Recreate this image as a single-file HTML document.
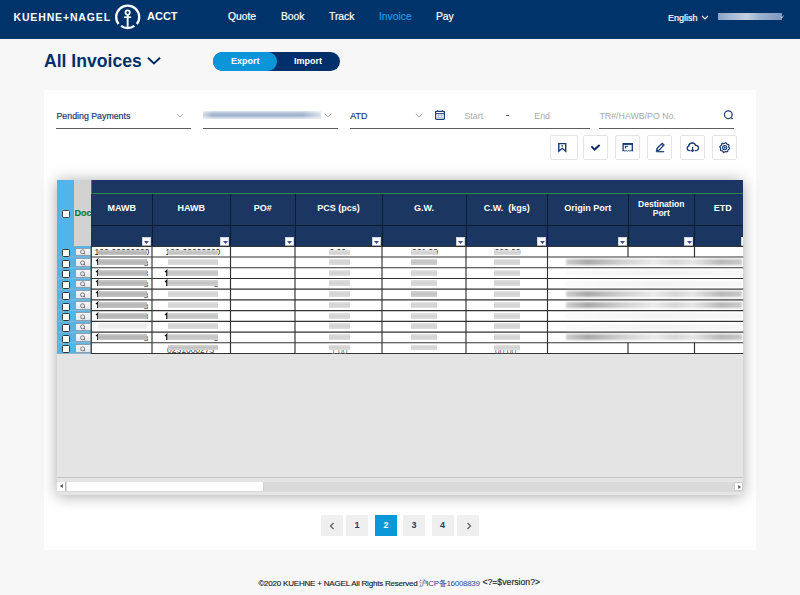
<!DOCTYPE html>
<html><head><meta charset="utf-8">
<style>
*{margin:0;padding:0;box-sizing:border-box}
html,body{width:800px;height:595px;overflow:hidden;background:#f7f7f7;font-family:"Liberation Sans",sans-serif}
.a{position:absolute}
#hdr{left:0;top:0;width:800px;height:39px;background:#003369}
.logo{left:13.5px;top:12px;font-size:10.5px;font-weight:bold;color:#fff;letter-spacing:0.85px;white-space:nowrap;line-height:10px}
.acct{left:147px;top:11px;font-size:11px;font-weight:bold;color:#fff;line-height:11px}
.nav{top:11px;font-size:10.3px;color:#fff;-webkit-text-stroke:0.2px currentColor;line-height:12px;white-space:nowrap}
.title{left:44px;top:50.8px;font-size:17.6px;font-weight:bold;color:#00306b;line-height:20px;white-space:nowrap}
.tog{left:213px;top:52px;width:127px;height:19px;border-radius:10px;background:#00306b}
.exp{left:0;top:0;width:64px;height:19px;border-radius:10px;background:#0b96d9}
.togt{top:4px;font-size:9px;font-weight:bold;color:#fff;line-height:11px}
#panel{left:44px;top:90px;width:712px;height:460px;background:#fff}
.sel{font-size:8.8px;color:#1d3a6c;-webkit-text-stroke:0.2px currentColor;line-height:11px;white-space:nowrap}
.ul{height:1px;background:#5e5e5e}
.ph{font-size:8.8px;color:#a9a9a9;line-height:11px;white-space:nowrap}
.ib{top:135px;width:25px;height:25px;border:1px solid #e6e6e6;border-radius:2px;background:#fff}
.ib svg{position:absolute;left:5px;top:5px}
</style></head><body>
<div id="hdr" class="a">
  <div class="a logo">KUEHNE+NAGEL</div>
  <svg class="a" style="left:110px;top:0px" width="36" height="34" viewBox="110 0 36 34"><g fill="none" stroke="#fff"><path d="M118.52 24.02 A11.5 11.5 0 1 1 136.88 24.02" stroke-width="2.3"/><path d="M134.32 25.88 A11.0 11.0 0 0 1 121.08 25.88" stroke-width="2.3"/><circle cx="127.65" cy="12.6" r="2.2" stroke-width="1.7"/><path d="M124.1 17.2 H131.2" stroke-width="1.6"/><path d="M127.65 14.7 V27.6" stroke-width="1.9"/></g></svg>
  <div class="a acct">ACCT</div>
  <div class="a nav" style="left:228px">Quote</div>
  <div class="a nav" style="left:281px">Book</div>
  <div class="a nav" style="left:329px">Track</div>
  <div class="a nav" style="left:379px;color:#1a9be3">Invoice</div>
  <div class="a nav" style="left:436px">Pay</div>
  <div class="a nav" style="left:668px;top:12px;font-size:9px">English</div>
  <svg class="a" style="left:701px;top:15px" width="8" height="5" viewBox="0 0 8 5"><path d="M1 1 L4 4 L7 1" fill="none" stroke="#fff" stroke-width="1.1"/></svg>
  <div class="a" style="left:718px;top:12.5px;width:64px;height:7.5px;background:linear-gradient(90deg,#8ba3c6,#a6b9d4 20%,#c2cfe0 45%,#9db1cf 65%,#7f98bf 100%);filter:blur(0.7px)"></div>
  <svg class="a" style="left:780px;top:15px" width="4" height="4" viewBox="0 0 4 4"><path d="M0.5 1.5 L2 3 L3.5 0.5" fill="none" stroke="#c8d2e2" stroke-width="0.8"/></svg>
</div>
<div class="a title">All Invoices</div>
<svg class="a" style="left:146px;top:55px" width="16" height="11" viewBox="0 0 16 11"><path d="M1.9 2.7 L7.95 8.4 L14 2.7" fill="none" stroke="#00285f" stroke-width="1.9"/></svg>
<div class="a tog"><div class="a exp"></div>
  <div class="a togt" style="left:18px">Export</div>
  <div class="a togt" style="left:81px">Import</div>
</div>
<div id="panel" class="a"></div>
<!-- filters -->
<div class="a sel" style="left:56.5px;top:111px">Pending Payments</div>
<svg class="a" style="left:176px;top:112.5px" width="8" height="5" viewBox="0 0 8 5"><path d="M0.8 0.8 L4 4 L7.2 0.8" fill="none" stroke="#a0a0a0" stroke-width="0.9"/></svg>
<div class="a ul" style="left:56px;top:128px;width:135px"></div>
<div class="a" style="left:203px;top:111.3px;width:118px;height:8px;background:linear-gradient(90deg,rgba(255,255,255,.5),rgba(255,255,255,0) 8%,rgba(255,255,255,0) 85%,rgba(255,255,255,.6)),linear-gradient(#dfe5ee,#aebdd3 30%,#a0b2cc 55%,#c5d0e0 80%,#e6ebf2);filter:blur(0.5px)"></div>
<svg class="a" style="left:323.5px;top:112.5px" width="8" height="5" viewBox="0 0 8 5"><path d="M0.8 0.8 L4 4 L7.2 0.8" fill="none" stroke="#a0a0a0" stroke-width="0.9"/></svg>
<div class="a ul" style="left:203px;top:128px;width:135px"></div>
<div class="a sel" style="left:350.3px;top:111px">ATD</div>
<svg class="a" style="left:414.5px;top:112.5px" width="8" height="5" viewBox="0 0 8 5"><path d="M0.8 0.8 L4 4 L7.2 0.8" fill="none" stroke="#a0a0a0" stroke-width="0.9"/></svg>
<svg class="a" style="left:430px;top:105px" width="20" height="20" viewBox="430 105 20 20"><g fill="none" stroke="#1d3f78"><rect x="435.6" y="111.4" width="8.8" height="8" rx="0.8" stroke-width="1.2"/><path d="M435.6 113.6 H444.4" stroke-width="1"/><path d="M437.6 110.2 V112 M442.4 110.2 V112" stroke-width="1.2"/><path d="M437 115.4 H443 M437 117.3 H443" stroke-width="0.6" stroke="#7d93b8"/><path d="M438.6 114.2 V118.8 M441.4 114.2 V118.8" stroke-width="0.5" stroke="#9fb0cc"/></g></svg>
<div class="a ph" style="left:464.5px;top:111px">Start</div>
<div class="a" style="left:506px;top:115px;width:3px;height:1px;background:#555"></div>
<div class="a ph" style="left:534.3px;top:111px">End</div>
<div class="a ul" style="left:350px;top:128px;width:240px"></div>
<div class="a ph" style="left:599.5px;top:111px">TR#/HAWB/PO No.</div>
<svg class="a" style="left:720px;top:106px" width="18" height="18" viewBox="720 106 18 18"><circle cx="728.3" cy="114.7" r="3.85" fill="none" stroke="#1d3f78" stroke-width="1.25"/><path d="M731 117.5 L732.6 119.1" stroke="#1d3f78" stroke-width="1.3"/></svg>
<div class="a ul" style="left:599px;top:128px;width:135px"></div>
<!-- icon buttons -->
<svg class="a" style="left:540px;top:130px" width="210" height="35" viewBox="540 130 210 35">
<g fill="#fff" stroke="#e4e4e4" stroke-width="1">
<rect x="550.5" y="135.5" width="27" height="24" rx="1.5"/>
<rect x="583.5" y="135.5" width="24" height="24" rx="1.5"/>
<rect x="615.5" y="135.5" width="24" height="24" rx="1.5"/>
<rect x="647.5" y="135.5" width="24" height="24" rx="1.5"/>
<rect x="680.5" y="135.5" width="24" height="24" rx="1.5"/>
<rect x="712.5" y="135.5" width="24" height="24" rx="1.5"/>
</g>
<g fill="none" stroke="#173a73" stroke-linejoin="miter">
<path d="M558.8 143.6 H565.7 V151.2 L562.25 148.3 L558.8 151.2 Z" stroke-width="1.4"/>
<circle cx="562.2" cy="145.9" r="0.8" fill="#173a73" stroke="none"/>
<path d="M591.4 146.4 L594.6 149.6 L599.6 145" stroke-width="2" stroke="#0d2a63"/>
<path d="M623.1 151 V143.6 H632.3 V151" stroke-width="1.3"/>
<path d="M623.1 144.3 H632.3" stroke-width="1.2"/>
<path d="M625.4 148.4 V146.2 H628.2" stroke-width="1.1"/>
<path d="M622.6 151.2 L623.8 150.4 L625 151.2 L626.2 150.4 L627.4 151.2 L628.6 150.4 L629.8 151.2 L631 150.4 L632.6 151.2" stroke-width="0.9"/>
<path d="M656.6 150.6 L657.2 148.2 L662.2 143.3 L664 145.1 L659 150.1 Z" stroke-width="1.3"/>
<path d="M661.2 144.3 L663 146.1" stroke-width="1"/>
<path d="M656.2 151.7 H664.2" stroke-width="1.2"/>
<path d="M690.5 150.6 H689.6 A2.3 2.3 0 0 1 688.6 146.2 A3.6 3.6 0 0 1 695.6 145.4 A2.6 2.6 0 0 1 696.2 150.6 H694.8" stroke-width="1.4"/>
<path d="M692.6 146.8 V151.4 M691.2 150 L692.6 151.4 L694 150" stroke-width="1.2"/>
<path d="M725.68 142.70 L726.98 144.19 L728.86 144.82 L728.72 146.80 L729.60 148.58 L728.11 149.88 L727.48 151.76 L725.50 151.62 L723.72 152.50 L722.42 151.01 L720.54 150.38 L720.68 148.40 L719.80 146.62 L721.29 145.32 L721.92 143.44 L723.90 143.58 Z" stroke-width="1.2" stroke-linejoin="round"/><circle cx="724.7" cy="147.6" r="2.1" stroke-width="1.1"/><path d="M724.1 146.5 L725.7 147.6 L724.1 148.7 Z" fill="#173a73" stroke-width="0.4"/>
</g>
</svg>
<div class="a" style="left:56.5px;top:180px;width:686.7px;height:314.8px;background:#e4e4e4;box-shadow:0 1px 14px rgba(0,0,0,.34)"></div>
<div class="a" style="left:56.5px;top:180px;width:17.3px;height:173.5px;background:#52b4e9"></div>
<div class="a" style="left:73.8px;top:180px;width:17.6px;height:66.30000000000001px;background:#d2d2d2"></div>
<div class="a" style="left:73.8px;top:246.3px;width:17.6px;height:107.19999999999999px;background:#52b4e9"></div>
<div class="a" style="left:61.5px;top:209.5px;width:8.5px;height:8.5px;background:#fff;border:1px solid #444;border-radius:1.5px"></div>
<div class="a" style="left:74.5px;top:209px;font-size:9px;font-weight:bold;color:#0e7d33;-webkit-text-stroke:0.2px #0e7d33;line-height:9px;width:17px;overflow:hidden;white-space:nowrap">Doc</div>
<div class="a" style="left:91.3px;top:180px;width:651.9000000000001px;height:66.30000000000001px;background:#1b3660"></div>
<div class="a" style="left:91.3px;top:193px;width:651.9000000000001px;height:1px;background:#2b8a48"></div>
<div class="a" style="left:91.3px;top:180px;width:1px;height:14px;background:#2b8a48"></div>
<div class="a" style="left:91.3px;top:224.8px;width:651.9000000000001px;height:1px;background:#0c1a33"></div>
<div class="a" style="left:151.5px;top:194px;width:1px;height:52.30000000000001px;background:#0c1a33"></div>
<div class="a" style="left:230.0px;top:194px;width:1px;height:52.30000000000001px;background:#0c1a33"></div>
<div class="a" style="left:294.5px;top:194px;width:1px;height:52.30000000000001px;background:#0c1a33"></div>
<div class="a" style="left:381.5px;top:194px;width:1px;height:52.30000000000001px;background:#0c1a33"></div>
<div class="a" style="left:465.5px;top:194px;width:1px;height:52.30000000000001px;background:#0c1a33"></div>
<div class="a" style="left:547.0px;top:194px;width:1px;height:52.30000000000001px;background:#0c1a33"></div>
<div class="a" style="left:627.5px;top:194px;width:1px;height:52.30000000000001px;background:#0c1a33"></div>
<div class="a" style="left:694.0px;top:194px;width:1px;height:52.30000000000001px;background:#0c1a33"></div>
<div class="a" style="left:91.3px;top:204px;width:60.7px;text-align:center;font-size:9px;font-weight:bold;color:#fff;line-height:9px;white-space:nowrap">MAWB</div>
<div class="a" style="left:152px;top:204px;width:78.5px;text-align:center;font-size:9px;font-weight:bold;color:#fff;line-height:9px;white-space:nowrap">HAWB</div>
<div class="a" style="left:230.5px;top:204px;width:64.5px;text-align:center;font-size:9px;font-weight:bold;color:#fff;line-height:9px;white-space:nowrap">PO#</div>
<div class="a" style="left:295px;top:204px;width:87px;text-align:center;font-size:9px;font-weight:bold;color:#fff;line-height:9px;white-space:nowrap">PCS (pcs)</div>
<div class="a" style="left:382px;top:204px;width:84px;text-align:center;font-size:9px;font-weight:bold;color:#fff;line-height:9px;white-space:nowrap">G.W.</div>
<div class="a" style="left:466px;top:204px;width:81.5px;text-align:center;font-size:9px;font-weight:bold;color:#fff;line-height:9px;white-space:nowrap">C.W.&nbsp; (kgs)</div>
<div class="a" style="left:547.5px;top:204px;width:80.5px;text-align:center;font-size:9px;font-weight:bold;color:#fff;line-height:9px;white-space:nowrap">Origin Port</div>
<div class="a" style="left:628px;top:199.5px;width:66.5px;text-align:center;font-size:8.5px;font-weight:bold;color:#fff;line-height:9.6px">Destination<br>Port</div>
<div class="a" style="left:694.5px;top:204px;width:56.5px;text-align:center;font-size:9px;font-weight:bold;color:#fff;line-height:9px;white-space:nowrap">ETD</div>
<div class="a" style="left:141.7px;top:237px;width:9px;height:9px;background:#fff;border:1px solid #cfd4dc"><svg style="position:absolute;left:1.5px;top:2.5px" width="5" height="3" viewBox="0 0 5 3"><path d="M0 0 H5 L2.5 3 Z" fill="#3b4a8c"/></svg></div>
<div class="a" style="left:220.2px;top:237px;width:9px;height:9px;background:#fff;border:1px solid #cfd4dc"><svg style="position:absolute;left:1.5px;top:2.5px" width="5" height="3" viewBox="0 0 5 3"><path d="M0 0 H5 L2.5 3 Z" fill="#3b4a8c"/></svg></div>
<div class="a" style="left:284.7px;top:237px;width:9px;height:9px;background:#fff;border:1px solid #cfd4dc"><svg style="position:absolute;left:1.5px;top:2.5px" width="5" height="3" viewBox="0 0 5 3"><path d="M0 0 H5 L2.5 3 Z" fill="#3b4a8c"/></svg></div>
<div class="a" style="left:371.7px;top:237px;width:9px;height:9px;background:#fff;border:1px solid #cfd4dc"><svg style="position:absolute;left:1.5px;top:2.5px" width="5" height="3" viewBox="0 0 5 3"><path d="M0 0 H5 L2.5 3 Z" fill="#3b4a8c"/></svg></div>
<div class="a" style="left:455.7px;top:237px;width:9px;height:9px;background:#fff;border:1px solid #cfd4dc"><svg style="position:absolute;left:1.5px;top:2.5px" width="5" height="3" viewBox="0 0 5 3"><path d="M0 0 H5 L2.5 3 Z" fill="#3b4a8c"/></svg></div>
<div class="a" style="left:537.2px;top:237px;width:9px;height:9px;background:#fff;border:1px solid #cfd4dc"><svg style="position:absolute;left:1.5px;top:2.5px" width="5" height="3" viewBox="0 0 5 3"><path d="M0 0 H5 L2.5 3 Z" fill="#3b4a8c"/></svg></div>
<div class="a" style="left:617.7px;top:237px;width:9px;height:9px;background:#fff;border:1px solid #cfd4dc"><svg style="position:absolute;left:1.5px;top:2.5px" width="5" height="3" viewBox="0 0 5 3"><path d="M0 0 H5 L2.5 3 Z" fill="#3b4a8c"/></svg></div>
<div class="a" style="left:684.2px;top:237px;width:9px;height:9px;background:#fff;border:1px solid #cfd4dc"><svg style="position:absolute;left:1.5px;top:2.5px" width="5" height="3" viewBox="0 0 5 3"><path d="M0 0 H5 L2.5 3 Z" fill="#3b4a8c"/></svg></div>
<div class="a" style="left:740.5px;top:237px;width:2.7px;height:9px;background:#fff;border-left:1px solid #cfd4dc;border-top:1px solid #cfd4dc"></div>
<div class="a" style="left:91.3px;top:246.3px;width:651.9000000000001px;height:107.19999999999999px;background:#fff"></div>
<svg class="a" style="left:50px;top:240px" width="700" height="120" viewBox="50 240 700 120" fill="none"><path d="M90.8 246.30 H743.2" stroke="#333" stroke-width="1.15"/><path d="M56.5 257.02 H90.7" stroke="#8ab8d4" stroke-width="1"/><path d="M90.8 257.02 H743.2" stroke="#333" stroke-width="1.15"/><path d="M56.5 267.74 H90.7" stroke="#8ab8d4" stroke-width="1"/><path d="M90.8 267.74 H743.2" stroke="#333" stroke-width="1.15"/><path d="M56.5 278.46 H90.7" stroke="#8ab8d4" stroke-width="1"/><path d="M90.8 278.46 H743.2" stroke="#333" stroke-width="1.15"/><path d="M56.5 289.18 H90.7" stroke="#8ab8d4" stroke-width="1"/><path d="M90.8 289.18 H743.2" stroke="#333" stroke-width="1.15"/><path d="M56.5 299.90 H90.7" stroke="#8ab8d4" stroke-width="1"/><path d="M90.8 299.90 H743.2" stroke="#333" stroke-width="1.15"/><path d="M56.5 310.62 H90.7" stroke="#8ab8d4" stroke-width="1"/><path d="M90.8 310.62 H743.2" stroke="#333" stroke-width="1.15"/><path d="M56.5 321.34 H90.7" stroke="#8ab8d4" stroke-width="1"/><path d="M90.8 321.34 H743.2" stroke="#333" stroke-width="1.15"/><path d="M56.5 332.06 H90.7" stroke="#8ab8d4" stroke-width="1"/><path d="M90.8 332.06 H743.2" stroke="#333" stroke-width="1.15"/><path d="M56.5 342.78 H90.7" stroke="#8ab8d4" stroke-width="1"/><path d="M90.8 342.78 H743.2" stroke="#333" stroke-width="1.15"/><path d="M56.5 353.50 H90.7" stroke="#8ab8d4" stroke-width="1"/><path d="M90.8 353.50 H743.2" stroke="#333" stroke-width="1.15"/><path d="M152 246.3 V353.50" stroke="#333" stroke-width="1.15"/><path d="M230.5 246.3 V353.50" stroke="#333" stroke-width="1.15"/><path d="M295 246.3 V353.50" stroke="#333" stroke-width="1.15"/><path d="M382 246.3 V353.50" stroke="#333" stroke-width="1.15"/><path d="M466 246.3 V353.50" stroke="#333" stroke-width="1.15"/><path d="M547.5 246.3 V353.50" stroke="#333" stroke-width="1.15"/><path d="M628 246.3 V257.02 M628 342.78 V353.50" stroke="#333" stroke-width="1.15"/><path d="M694.5 246.3 V257.02 M694.5 342.78 V353.50" stroke="#333" stroke-width="1.15"/><path d="M91.3 246.3 V353.50" stroke="#333" stroke-width="1.15"/></svg>
<div class="a" style="left:61.8px;top:248.90px;width:8px;height:8px;background:#fff;border:1px solid #333;border-radius:1.5px"></div>
<div class="a" style="left:75px;top:247.50px;width:16.2px;height:8.8px;background:linear-gradient(#f6f7fa,#e4e7ee);border:1px solid #8f9eae;border-radius:1.5px"></div>
<svg class="a" style="left:78px;top:248.30px" width="10" height="8" viewBox="0 0 10 8"><circle cx="4.6" cy="3.8" r="2" fill="none" stroke="#666" stroke-width="0.85"/><path d="M6 5.2 L7.2 6.3" stroke="#666" stroke-width="0.95"/></svg>
<div class="a" style="left:61.8px;top:259.62px;width:8px;height:8px;background:#fff;border:1px solid #333;border-radius:1.5px"></div>
<div class="a" style="left:75px;top:258.22px;width:16.2px;height:8.8px;background:linear-gradient(#f6f7fa,#e4e7ee);border:1px solid #8f9eae;border-radius:1.5px"></div>
<svg class="a" style="left:78px;top:259.02px" width="10" height="8" viewBox="0 0 10 8"><circle cx="4.6" cy="3.8" r="2" fill="none" stroke="#666" stroke-width="0.85"/><path d="M6 5.2 L7.2 6.3" stroke="#666" stroke-width="0.95"/></svg>
<div class="a" style="left:61.8px;top:270.34px;width:8px;height:8px;background:#fff;border:1px solid #333;border-radius:1.5px"></div>
<div class="a" style="left:75px;top:268.94px;width:16.2px;height:8.8px;background:linear-gradient(#f6f7fa,#e4e7ee);border:1px solid #8f9eae;border-radius:1.5px"></div>
<svg class="a" style="left:78px;top:269.74px" width="10" height="8" viewBox="0 0 10 8"><circle cx="4.6" cy="3.8" r="2" fill="none" stroke="#666" stroke-width="0.85"/><path d="M6 5.2 L7.2 6.3" stroke="#666" stroke-width="0.95"/></svg>
<div class="a" style="left:61.8px;top:281.06px;width:8px;height:8px;background:#fff;border:1px solid #333;border-radius:1.5px"></div>
<div class="a" style="left:75px;top:279.66px;width:16.2px;height:8.8px;background:linear-gradient(#f6f7fa,#e4e7ee);border:1px solid #8f9eae;border-radius:1.5px"></div>
<svg class="a" style="left:78px;top:280.46px" width="10" height="8" viewBox="0 0 10 8"><circle cx="4.6" cy="3.8" r="2" fill="none" stroke="#666" stroke-width="0.85"/><path d="M6 5.2 L7.2 6.3" stroke="#666" stroke-width="0.95"/></svg>
<div class="a" style="left:61.8px;top:291.78px;width:8px;height:8px;background:#fff;border:1px solid #333;border-radius:1.5px"></div>
<div class="a" style="left:75px;top:290.38px;width:16.2px;height:8.8px;background:linear-gradient(#f6f7fa,#e4e7ee);border:1px solid #8f9eae;border-radius:1.5px"></div>
<svg class="a" style="left:78px;top:291.18px" width="10" height="8" viewBox="0 0 10 8"><circle cx="4.6" cy="3.8" r="2" fill="none" stroke="#666" stroke-width="0.85"/><path d="M6 5.2 L7.2 6.3" stroke="#666" stroke-width="0.95"/></svg>
<div class="a" style="left:61.8px;top:302.50px;width:8px;height:8px;background:#fff;border:1px solid #333;border-radius:1.5px"></div>
<div class="a" style="left:75px;top:301.10px;width:16.2px;height:8.8px;background:linear-gradient(#f6f7fa,#e4e7ee);border:1px solid #8f9eae;border-radius:1.5px"></div>
<svg class="a" style="left:78px;top:301.90px" width="10" height="8" viewBox="0 0 10 8"><circle cx="4.6" cy="3.8" r="2" fill="none" stroke="#666" stroke-width="0.85"/><path d="M6 5.2 L7.2 6.3" stroke="#666" stroke-width="0.95"/></svg>
<div class="a" style="left:61.8px;top:313.22px;width:8px;height:8px;background:#fff;border:1px solid #333;border-radius:1.5px"></div>
<div class="a" style="left:75px;top:311.82px;width:16.2px;height:8.8px;background:linear-gradient(#f6f7fa,#e4e7ee);border:1px solid #8f9eae;border-radius:1.5px"></div>
<svg class="a" style="left:78px;top:312.62px" width="10" height="8" viewBox="0 0 10 8"><circle cx="4.6" cy="3.8" r="2" fill="none" stroke="#666" stroke-width="0.85"/><path d="M6 5.2 L7.2 6.3" stroke="#666" stroke-width="0.95"/></svg>
<div class="a" style="left:61.8px;top:323.94px;width:8px;height:8px;background:#fff;border:1px solid #333;border-radius:1.5px"></div>
<div class="a" style="left:75px;top:322.54px;width:16.2px;height:8.8px;background:linear-gradient(#f6f7fa,#e4e7ee);border:1px solid #8f9eae;border-radius:1.5px"></div>
<svg class="a" style="left:78px;top:323.34px" width="10" height="8" viewBox="0 0 10 8"><circle cx="4.6" cy="3.8" r="2" fill="none" stroke="#666" stroke-width="0.85"/><path d="M6 5.2 L7.2 6.3" stroke="#666" stroke-width="0.95"/></svg>
<div class="a" style="left:61.8px;top:334.66px;width:8px;height:8px;background:#fff;border:1px solid #333;border-radius:1.5px"></div>
<div class="a" style="left:75px;top:333.26px;width:16.2px;height:8.8px;background:linear-gradient(#f6f7fa,#e4e7ee);border:1px solid #8f9eae;border-radius:1.5px"></div>
<svg class="a" style="left:78px;top:334.06px" width="10" height="8" viewBox="0 0 10 8"><circle cx="4.6" cy="3.8" r="2" fill="none" stroke="#666" stroke-width="0.85"/><path d="M6 5.2 L7.2 6.3" stroke="#666" stroke-width="0.95"/></svg>
<div class="a" style="left:61.8px;top:345.38px;width:8px;height:8px;background:#fff;border:1px solid #333;border-radius:1.5px"></div>
<div class="a" style="left:75px;top:343.98px;width:16.2px;height:8.8px;background:linear-gradient(#f6f7fa,#e4e7ee);border:1px solid #8f9eae;border-radius:1.5px"></div>
<svg class="a" style="left:78px;top:344.78px" width="10" height="8" viewBox="0 0 10 8"><circle cx="4.6" cy="3.8" r="2" fill="none" stroke="#666" stroke-width="0.85"/><path d="M6 5.2 L7.2 6.3" stroke="#666" stroke-width="0.95"/></svg>
<div class="a" style="left:94.5px;top:247.50px;font-size:8.5px;color:#222;line-height:9px;white-space:nowrap;">100-00000000</div>
<div class="a" style="left:165.5px;top:247.50px;font-size:8.5px;color:#222;line-height:9px;white-space:nowrap;">100-00000000</div>
<div class="a" style="left:329.5px;top:247.50px;font-size:8.5px;color:#222;line-height:9px;white-space:nowrap;">0.00</div>
<div class="a" style="left:412px;top:247.50px;font-size:8.5px;color:#222;line-height:9px;white-space:nowrap;">261.00</div>
<div class="a" style="left:494.5px;top:247.50px;font-size:8.5px;color:#222;line-height:9px;white-space:nowrap;">229.00</div>
<div class="a" style="left:98.3px;top:249.90px;width:48.500000000000014px;height:5.2px;background:linear-gradient(#cdcdcd,#b3b3b3 50%,#c6c6c6);filter:blur(0.35px)"></div>
<div class="a" style="left:168px;top:249.90px;width:49.5px;height:5.2px;background:linear-gradient(#d6d6d6,#c2c2c2 50%,#d2d2d2);filter:blur(0.35px)"></div>
<div class="a" style="left:329px;top:249.90px;width:21.19999999999999px;height:5.2px;background:linear-gradient(#e2e2e2,#d2d2d2 50%,#dedede);filter:blur(0.35px)"></div>
<div class="a" style="left:411.3px;top:249.90px;width:25.69999999999999px;height:5.2px;background:linear-gradient(#e2e2e2,#d2d2d2 50%,#dedede);filter:blur(0.35px)"></div>
<div class="a" style="left:494.2px;top:249.90px;width:25.69999999999999px;height:5.2px;background:linear-gradient(#e2e2e2,#d2d2d2 50%,#dedede);filter:blur(0.35px)"></div>
<svg class="a" style="left:94.80px;top:257.02px" width="6" height="10" viewBox="0 0 6 10"><path d="M1 3.9 L2.8 2.4 V8.1" fill="none" stroke="#151515" stroke-width="1.35"/></svg>
<div class="a" style="left:143.8px;top:258.62px;font-size:8px;color:#333;line-height:9px;white-space:nowrap;">3</div>
<div class="a" style="left:98.3px;top:259.02px;width:48.500000000000014px;height:6px;background:linear-gradient(#cdcdcd,#b3b3b3 50%,#c6c6c6);filter:blur(0.35px)"></div>
<div class="a" style="left:168px;top:259.02px;width:49.5px;height:6px;background:linear-gradient(#e2e2e2,#d2d2d2 50%,#dedede);filter:blur(0.35px)"></div>
<div class="a" style="left:329px;top:259.02px;width:21.19999999999999px;height:6px;background:linear-gradient(#e2e2e2,#d2d2d2 50%,#dedede);filter:blur(0.35px)"></div>
<div class="a" style="left:411.3px;top:259.02px;width:25.69999999999999px;height:6px;background:linear-gradient(#d6d6d6,#c2c2c2 50%,#d2d2d2);filter:blur(0.35px)"></div>
<div class="a" style="left:494.2px;top:259.02px;width:25.69999999999999px;height:6px;background:linear-gradient(#e2e2e2,#d2d2d2 50%,#dedede);filter:blur(0.35px)"></div>
<div class="a" style="left:566px;top:259.22px;width:176px;height:6px;background:linear-gradient(90deg,#cfcfcf,#a8a8a8 12%,#d0d0d0 32%,#eaeaea 50%,#d6d6d6 62%,#e6e6e6 72%,#b8b8b8 88%,#c8c8c8);filter:blur(1.1px)"></div>
<svg class="a" style="left:94.80px;top:267.74px" width="6" height="10" viewBox="0 0 6 10"><path d="M1 3.9 L2.8 2.4 V8.1" fill="none" stroke="#151515" stroke-width="1.35"/></svg>
<div class="a" style="left:143.8px;top:269.34px;font-size:8px;color:#333;line-height:9px;white-space:nowrap;">3</div>
<div class="a" style="left:98.3px;top:269.74px;width:48.500000000000014px;height:6px;background:linear-gradient(#cdcdcd,#b3b3b3 50%,#c6c6c6);filter:blur(0.35px)"></div>
<svg class="a" style="left:164.30px;top:267.74px" width="6" height="10" viewBox="0 0 6 10"><path d="M1 3.9 L2.8 2.4 V8.1" fill="none" stroke="#151515" stroke-width="1.35"/></svg>
<div class="a" style="left:213.8px;top:269.34px;font-size:8px;color:#333;line-height:9px;white-space:nowrap;">3</div>
<div class="a" style="left:168px;top:269.74px;width:49.5px;height:6px;background:linear-gradient(#d6d6d6,#c2c2c2 50%,#d2d2d2);filter:blur(0.35px)"></div>
<div class="a" style="left:329px;top:269.74px;width:21.19999999999999px;height:6px;background:linear-gradient(#e2e2e2,#d2d2d2 50%,#dedede);filter:blur(0.35px)"></div>
<div class="a" style="left:411.3px;top:269.74px;width:25.69999999999999px;height:6px;background:linear-gradient(#e2e2e2,#d2d2d2 50%,#dedede);filter:blur(0.35px)"></div>
<div class="a" style="left:494.2px;top:269.74px;width:25.69999999999999px;height:6px;background:linear-gradient(#e2e2e2,#d2d2d2 50%,#dedede);filter:blur(0.35px)"></div>
<div class="a" style="left:566px;top:269.94px;width:176px;height:6px;background:linear-gradient(90deg,#fafafa,#f3f3f3 50%,#f7f7f7);filter:blur(1.2px)"></div>
<svg class="a" style="left:94.80px;top:278.46px" width="6" height="10" viewBox="0 0 6 10"><path d="M1 3.9 L2.8 2.4 V8.1" fill="none" stroke="#151515" stroke-width="1.35"/></svg>
<div class="a" style="left:143.8px;top:280.06px;font-size:8px;color:#333;line-height:9px;white-space:nowrap;">3</div>
<div class="a" style="left:98.3px;top:280.46px;width:48.500000000000014px;height:6px;background:linear-gradient(#cdcdcd,#b3b3b3 50%,#c6c6c6);filter:blur(0.35px)"></div>
<svg class="a" style="left:164.30px;top:278.46px" width="6" height="10" viewBox="0 0 6 10"><path d="M1 3.9 L2.8 2.4 V8.1" fill="none" stroke="#151515" stroke-width="1.35"/></svg>
<div class="a" style="left:213.8px;top:280.06px;font-size:8px;color:#333;line-height:9px;white-space:nowrap;">3</div>
<div class="a" style="left:168px;top:280.46px;width:49.5px;height:6px;background:linear-gradient(#d6d6d6,#c2c2c2 50%,#d2d2d2);filter:blur(0.35px)"></div>
<div class="a" style="left:329px;top:280.46px;width:21.19999999999999px;height:6px;background:linear-gradient(#e2e2e2,#d2d2d2 50%,#dedede);filter:blur(0.35px)"></div>
<div class="a" style="left:411.3px;top:280.46px;width:25.69999999999999px;height:6px;background:linear-gradient(#e2e2e2,#d2d2d2 50%,#dedede);filter:blur(0.35px)"></div>
<div class="a" style="left:494.2px;top:280.46px;width:25.69999999999999px;height:6px;background:linear-gradient(#e2e2e2,#d2d2d2 50%,#dedede);filter:blur(0.35px)"></div>
<div class="a" style="left:566px;top:280.66px;width:176px;height:6px;background:linear-gradient(90deg,#fafafa,#f3f3f3 50%,#f7f7f7);filter:blur(1.2px)"></div>
<svg class="a" style="left:94.80px;top:289.18px" width="6" height="10" viewBox="0 0 6 10"><path d="M1 3.9 L2.8 2.4 V8.1" fill="none" stroke="#151515" stroke-width="1.35"/></svg>
<div class="a" style="left:143.8px;top:290.78px;font-size:8px;color:#333;line-height:9px;white-space:nowrap;">3</div>
<div class="a" style="left:98.3px;top:291.18px;width:48.500000000000014px;height:6px;background:linear-gradient(#cdcdcd,#b3b3b3 50%,#c6c6c6);filter:blur(0.35px)"></div>
<div class="a" style="left:168px;top:291.18px;width:49.5px;height:6px;background:linear-gradient(#e2e2e2,#d2d2d2 50%,#dedede);filter:blur(0.35px)"></div>
<div class="a" style="left:329px;top:291.18px;width:21.19999999999999px;height:6px;background:linear-gradient(#e2e2e2,#d2d2d2 50%,#dedede);filter:blur(0.35px)"></div>
<div class="a" style="left:411.3px;top:291.18px;width:25.69999999999999px;height:6px;background:linear-gradient(#d6d6d6,#c2c2c2 50%,#d2d2d2);filter:blur(0.35px)"></div>
<div class="a" style="left:494.2px;top:291.18px;width:25.69999999999999px;height:6px;background:linear-gradient(#e2e2e2,#d2d2d2 50%,#dedede);filter:blur(0.35px)"></div>
<div class="a" style="left:566px;top:291.38px;width:176px;height:6px;background:linear-gradient(90deg,#cfcfcf,#a8a8a8 12%,#d0d0d0 32%,#eaeaea 50%,#d6d6d6 62%,#e6e6e6 72%,#b8b8b8 88%,#c8c8c8);filter:blur(1.1px)"></div>
<svg class="a" style="left:94.80px;top:299.90px" width="6" height="10" viewBox="0 0 6 10"><path d="M1 3.9 L2.8 2.4 V8.1" fill="none" stroke="#151515" stroke-width="1.35"/></svg>
<div class="a" style="left:143.8px;top:301.50px;font-size:8px;color:#333;line-height:9px;white-space:nowrap;">3</div>
<div class="a" style="left:98.3px;top:301.90px;width:48.500000000000014px;height:6px;background:linear-gradient(#cdcdcd,#b3b3b3 50%,#c6c6c6);filter:blur(0.35px)"></div>
<div class="a" style="left:168px;top:301.90px;width:49.5px;height:6px;background:linear-gradient(#e2e2e2,#d2d2d2 50%,#dedede);filter:blur(0.35px)"></div>
<div class="a" style="left:329px;top:301.90px;width:21.19999999999999px;height:6px;background:linear-gradient(#e2e2e2,#d2d2d2 50%,#dedede);filter:blur(0.35px)"></div>
<div class="a" style="left:411.3px;top:301.90px;width:25.69999999999999px;height:6px;background:linear-gradient(#e2e2e2,#d2d2d2 50%,#dedede);filter:blur(0.35px)"></div>
<div class="a" style="left:494.2px;top:301.90px;width:25.69999999999999px;height:6px;background:linear-gradient(#e2e2e2,#d2d2d2 50%,#dedede);filter:blur(0.35px)"></div>
<div class="a" style="left:566px;top:302.10px;width:176px;height:6px;background:linear-gradient(90deg,#cfcfcf,#a8a8a8 12%,#d0d0d0 32%,#eaeaea 50%,#d6d6d6 62%,#e6e6e6 72%,#b8b8b8 88%,#c8c8c8);filter:blur(1.1px)"></div>
<svg class="a" style="left:94.80px;top:310.62px" width="6" height="10" viewBox="0 0 6 10"><path d="M1 3.9 L2.8 2.4 V8.1" fill="none" stroke="#151515" stroke-width="1.35"/></svg>
<div class="a" style="left:143.8px;top:312.22px;font-size:8px;color:#333;line-height:9px;white-space:nowrap;">3</div>
<div class="a" style="left:98.3px;top:312.62px;width:48.500000000000014px;height:6px;background:linear-gradient(#cdcdcd,#b3b3b3 50%,#c6c6c6);filter:blur(0.35px)"></div>
<svg class="a" style="left:164.30px;top:310.62px" width="6" height="10" viewBox="0 0 6 10"><path d="M1 3.9 L2.8 2.4 V8.1" fill="none" stroke="#151515" stroke-width="1.35"/></svg>
<div class="a" style="left:213.8px;top:312.22px;font-size:8px;color:#333;line-height:9px;white-space:nowrap;">3</div>
<div class="a" style="left:168px;top:312.62px;width:49.5px;height:6px;background:linear-gradient(#d6d6d6,#c2c2c2 50%,#d2d2d2);filter:blur(0.35px)"></div>
<div class="a" style="left:329px;top:312.62px;width:21.19999999999999px;height:6px;background:linear-gradient(#e2e2e2,#d2d2d2 50%,#dedede);filter:blur(0.35px)"></div>
<div class="a" style="left:411.3px;top:312.62px;width:25.69999999999999px;height:6px;background:linear-gradient(#e2e2e2,#d2d2d2 50%,#dedede);filter:blur(0.35px)"></div>
<div class="a" style="left:494.2px;top:312.62px;width:25.69999999999999px;height:6px;background:linear-gradient(#e2e2e2,#d2d2d2 50%,#dedede);filter:blur(0.35px)"></div>
<div class="a" style="left:566px;top:312.82px;width:176px;height:6px;background:linear-gradient(90deg,#fafafa,#f3f3f3 50%,#f7f7f7);filter:blur(1.2px)"></div>
<div class="a" style="left:98.3px;top:323.34px;width:48.500000000000014px;height:6px;background:linear-gradient(#f0f0f0,#e8e8e8 50%,#efefef);filter:blur(1px)"></div>
<div class="a" style="left:168px;top:323.34px;width:49.5px;height:6px;background:linear-gradient(#e2e2e2,#d2d2d2 50%,#dedede);filter:blur(0.35px)"></div>
<div class="a" style="left:329px;top:323.34px;width:21.19999999999999px;height:6px;background:linear-gradient(#e2e2e2,#d2d2d2 50%,#dedede);filter:blur(0.35px)"></div>
<div class="a" style="left:411.3px;top:323.34px;width:25.69999999999999px;height:6px;background:linear-gradient(#e2e2e2,#d2d2d2 50%,#dedede);filter:blur(0.35px)"></div>
<div class="a" style="left:494.2px;top:323.34px;width:25.69999999999999px;height:6px;background:linear-gradient(#e2e2e2,#d2d2d2 50%,#dedede);filter:blur(0.35px)"></div>
<div class="a" style="left:566px;top:323.54px;width:176px;height:6px;background:linear-gradient(90deg,#fafafa,#f3f3f3 50%,#f7f7f7);filter:blur(1.2px)"></div>
<svg class="a" style="left:94.80px;top:332.06px" width="6" height="10" viewBox="0 0 6 10"><path d="M1 3.9 L2.8 2.4 V8.1" fill="none" stroke="#151515" stroke-width="1.35"/></svg>
<div class="a" style="left:143.8px;top:333.66px;font-size:8px;color:#333;line-height:9px;white-space:nowrap;">3</div>
<div class="a" style="left:98.3px;top:334.06px;width:48.500000000000014px;height:6px;background:linear-gradient(#cdcdcd,#b3b3b3 50%,#c6c6c6);filter:blur(0.35px)"></div>
<svg class="a" style="left:164.30px;top:332.06px" width="6" height="10" viewBox="0 0 6 10"><path d="M1 3.9 L2.8 2.4 V8.1" fill="none" stroke="#151515" stroke-width="1.35"/></svg>
<div class="a" style="left:213.8px;top:333.66px;font-size:8px;color:#333;line-height:9px;white-space:nowrap;">3</div>
<div class="a" style="left:168px;top:334.06px;width:49.5px;height:6px;background:linear-gradient(#d6d6d6,#c2c2c2 50%,#d2d2d2);filter:blur(0.35px)"></div>
<div class="a" style="left:329px;top:334.06px;width:21.19999999999999px;height:6px;background:linear-gradient(#e2e2e2,#d2d2d2 50%,#dedede);filter:blur(0.35px)"></div>
<div class="a" style="left:411.3px;top:334.06px;width:25.69999999999999px;height:6px;background:linear-gradient(#e2e2e2,#d2d2d2 50%,#dedede);filter:blur(0.35px)"></div>
<div class="a" style="left:494.2px;top:334.06px;width:25.69999999999999px;height:6px;background:linear-gradient(#e2e2e2,#d2d2d2 50%,#dedede);filter:blur(0.35px)"></div>
<div class="a" style="left:566px;top:334.26px;width:176px;height:6px;background:linear-gradient(90deg,#cfcfcf,#a8a8a8 12%,#d0d0d0 32%,#eaeaea 50%,#d6d6d6 62%,#e6e6e6 72%,#b8b8b8 88%,#c8c8c8);filter:blur(1.1px)"></div>
<div class="a" style="left:167px;top:346.18px;font-size:8.5px;color:#444;line-height:9px;white-space:nowrap;">0231000273</div>
<div class="a" style="left:331px;top:346.68px;font-size:8.5px;color:#777;line-height:9px;white-space:nowrap;">1.00</div>
<div class="a" style="left:495px;top:346.68px;font-size:8.5px;color:#666;line-height:9px;white-space:nowrap;">00.00</div>
<div class="a" style="left:168px;top:344.78px;width:49.5px;height:5.2px;background:linear-gradient(#d6d6d6,#c2c2c2 50%,#d2d2d2);filter:blur(0.35px)"></div>
<div class="a" style="left:329px;top:344.78px;width:21.19999999999999px;height:5.2px;background:linear-gradient(#e2e2e2,#d2d2d2 50%,#dedede);filter:blur(0.35px)"></div>
<div class="a" style="left:411.3px;top:344.78px;width:25.69999999999999px;height:5.2px;background:linear-gradient(#e2e2e2,#d2d2d2 50%,#dedede);filter:blur(0.35px)"></div>
<div class="a" style="left:494.2px;top:344.78px;width:25.69999999999999px;height:5.2px;background:linear-gradient(#e2e2e2,#d2d2d2 50%,#dedede);filter:blur(0.35px)"></div>
<div class="a" style="left:56.5px;top:477px;width:686.7px;height:1px;background:#c4c4c4"></div>
<div class="a" style="left:56.5px;top:478px;width:686.7px;height:16.7px;background:#e5e5e5"></div>
<div class="a" style="left:56.5px;top:481.5px;width:686.7px;height:10px;background:#dadada"></div>
<div class="a" style="left:56.5px;top:482px;width:9px;height:8.5px;background:#fff;border-right:1px solid #b5b5b5"><svg style="position:absolute;left:3.2px;top:2.2px" width="3" height="4" viewBox="0 0 3 4"><path d="M2.8 0 V4 L0 2 Z" fill="#444"/></svg></div>
<div class="a" style="left:66.5px;top:482px;width:197px;height:8.5px;background:#fff;border-right:1px solid #d0d0d0"></div>
<div class="a" style="left:733.5px;top:481.8px;width:9.2px;height:9.4px;background:#fff;border:1px solid #c8c8c8;border-radius:1.5px"><svg style="position:absolute;left:3px;top:2.2px" width="3" height="4" viewBox="0 0 3 4"><path d="M0.2 0 V4 L3 2 Z" fill="#555"/></svg></div>
<div class="a" style="left:321px;top:515px;width:22px;height:21px;background:#efefef"><svg style="position:absolute;left:7.5px;top:7px" width="6" height="8" viewBox="0 0 6 8"><path d="M4.5 1 L1.5 4 L4.5 7" fill="none" stroke="#555" stroke-width="1.1"/></svg></div>
<div class="a" style="left:346px;top:515px;width:22px;height:21px;background:#efefef"><div style="position:absolute;left:0;top:6px;width:100%;text-align:center;font-size:9px;font-weight:bold;color:#1d3a6c;line-height:9px">1</div></div>
<div class="a" style="left:375px;top:515px;width:22px;height:21px;background:#0b98d8"><div style="position:absolute;left:0;top:6px;width:100%;text-align:center;font-size:9px;font-weight:bold;color:#fff;line-height:9px">2</div></div>
<div class="a" style="left:403px;top:515px;width:22px;height:21px;background:#efefef"><div style="position:absolute;left:0;top:6px;width:100%;text-align:center;font-size:9px;font-weight:bold;color:#1d3a6c;line-height:9px">3</div></div>
<div class="a" style="left:431.5px;top:515px;width:22px;height:21px;background:#efefef"><div style="position:absolute;left:0;top:6px;width:100%;text-align:center;font-size:9px;font-weight:bold;color:#1d3a6c;line-height:9px">4</div></div>
<div class="a" style="left:457px;top:515px;width:22px;height:21px;background:#efefef"><svg style="position:absolute;left:8.5px;top:7px" width="6" height="8" viewBox="0 0 6 8"><path d="M1.5 1 L4.5 4 L1.5 7" fill="none" stroke="#555" stroke-width="1.1"/></svg></div>
<div class="a" style="left:258.4px;top:578.5px;font-size:8px;letter-spacing:-0.2px;color:#222;-webkit-text-stroke:0.15px currentColor;line-height:9px;white-space:nowrap">©2020 KUEHNE + NAGEL All Rights Reserved</div>
<div class="a" style="left:418.6px;top:578.5px;font-size:8px;letter-spacing:-0.3px;color:#1d4f9a;line-height:9px;white-space:nowrap">沪ICP备16008839</div>
<div class="a" style="left:482.4px;top:578px;font-size:8.7px;color:#222;-webkit-text-stroke:0.15px currentColor;line-height:9px;white-space:nowrap">&lt;?=$version?&gt;</div>
</body></html>
